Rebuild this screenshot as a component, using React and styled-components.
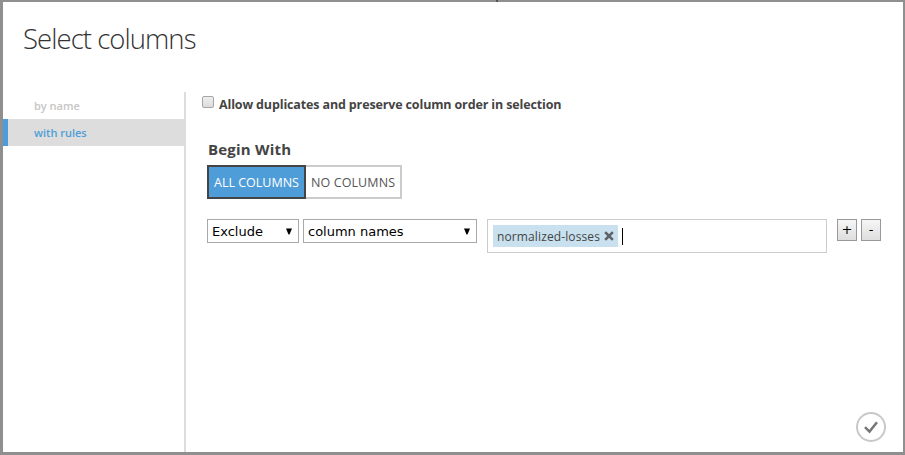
import React from "react";
import styled, { createGlobalStyle } from "styled-components";

const GlobalStyle = createGlobalStyle`
  * { box-sizing: border-box; }
  body { margin: 0; overflow: hidden; font-family: "Open Sans", "Noto Sans", sans-serif; color: #444; }
`;

const Dialog = styled.div`
  position: relative;
  width: 905px;
  height: 455px;
  display: flex;
  flex-direction: column;
  background: #fff;
  border: solid #908f8f;
  border-width: 2px 2px 3px 3px;
`;

const BackdropMark = styled.i`
  position: absolute;
  top: -2px;
  left: 493px;
  width: 2px;
  height: 2px;
  background: #555;
`;

const Title = styled.h1`
  margin: 0;
  height: 90px;
  padding: 17px 0 0 20px;
  font-size: 27.5px;
  line-height: 40px;
  font-weight: 300;
  letter-spacing: -0.95px;
  white-space: nowrap;
  color: #333;
`;

const Body = styled.div`
  flex: 1;
  display: flex;
`;

const Sidebar = styled.nav`
  width: 183px;
  border-right: 2px solid #ddd;
`;

const Tab = styled.div`
  height: 27px;
  padding-left: ${(p) => (p.$active ? 26 : 31)}px;
  border-left: ${(p) => (p.$active ? "5px solid #4f9dd8" : "0")};
  background: ${(p) => (p.$active ? "#ddd" : "transparent")};
  color: ${(p) => (p.$active ? "#4f9dd8" : "#c6c6c6")};
  font-size: 11px;
  font-weight: 600;
  line-height: 27px;
`;

const Main = styled.main`
  flex: 1;
  padding: 4px 0 0 21px;
`;

const CheckRow = styled.label`
  display: flex;
  height: 18px;
  margin-left: -5px;
  gap: 5px;
`;

const Box = styled.span`
  width: 12px;
  height: 12px;
  border: 1px solid #a6a6a6;
  border-radius: 2px;
  background: linear-gradient(#eee, #dcdcdc);
`;

const CheckLabel = styled.span`
  font-size: 12.5px;
  font-weight: 700;
  line-height: 17px;
  letter-spacing: -0.14px;
  white-space: nowrap;
`;

const Heading = styled.h2`
  margin: 25px 0 0 1px;
  height: 26px;
  font-size: 15px;
  line-height: 21px;
  font-weight: 700;
  letter-spacing: 0.2px;
`;

const Toggle = styled.div`
  display: flex;
  height: 34px;
`;

const Choice = styled.div`
  width: ${(p) => p.$width}px;
  padding-left: 5px;
  border: 2px solid ${(p) => (p.$active ? "#444" : "#ccc")};
  border-left-width: ${(p) => (p.$active ? 2 : 0)}px;
  background: ${(p) => (p.$active ? "#4f9dd8" : "#fff")};
  color: ${(p) => (p.$active ? "#fff" : "#555")};
  font-size: 12.5px;
  line-height: 31px;
  letter-spacing: ${(p) => p.$spacing}px;
  white-space: nowrap;
`;

const RuleRow = styled.div`
  display: flex;
  align-items: flex-start;
  margin-top: 20px;
`;

const Select = styled.div`
  display: flex;
  justify-content: space-between;
  width: ${(p) => p.$width}px;
  height: 24px;
  margin-right: ${(p) => p.$gap}px;
  padding: 0 6px 0 4px;
  border: 1px solid #a9a9a9;
  color: #000;
  font-family: "DejaVu Sans", sans-serif;
  font-size: 13px;
  line-height: 23px;

  svg { margin-top: 8px; }
`;

const TokenInput = styled.div`
  display: flex;
  width: 340px;
  height: 34px;
  margin-right: 10px;
  padding: 5px;
  border: 1px solid #ccc;
`;

const Token = styled.span`
  display: flex;
  justify-content: space-between;
  width: 125px;
  height: 22px;
  padding: 0 4px;
  background: #c9e1ef;
  font-size: 12px;
  line-height: 23px;
  letter-spacing: 0.12px;
  white-space: nowrap;

  svg { margin-top: 6px; }
`;

const Caret = styled.i`
  width: 1px;
  height: 17px;
  margin: 3px 0 0 4px;
  background: #000;
`;

const SmallButton = styled.button`
  width: 20px;
  height: 22px;
  margin-right: 4px;
  padding: 0;
  border: 1px solid #999;
  background: linear-gradient(#f6f6f6, #dedede);
  color: #000;
  font: 13px/20px "DejaVu Sans", sans-serif;
`;

const Confirm = styled.div`
  position: absolute;
  right: 16px;
  bottom: 9px;
  width: 32px;
  height: 32px;
`;

const Arrow = () => (
  <svg width="6" height="7" viewBox="0 0 6 7">
    <path d="M0 0.5H6L3.5 6.5H2.5Z" fill="#000" />
  </svg>
);

export default function App() {
  return (
    <>
      <GlobalStyle />
      <Dialog>
        <BackdropMark />
        <Title>Select columns</Title>
        <Body>
          <Sidebar>
            <Tab>by name</Tab>
            <Tab $active>with rules</Tab>
          </Sidebar>
          <Main>
            <CheckRow>
              <Box />
              <CheckLabel>Allow duplicates and preserve column order in selection</CheckLabel>
            </CheckRow>
            <Heading>Begin With</Heading>
            <Toggle>
              <Choice $active $width={99} $spacing={0}>ALL COLUMNS</Choice>
              <Choice $width={96} $spacing={0.1}>NO COLUMNS</Choice>
            </Toggle>
            <RuleRow>
              <Select $width={92} $gap={4}>Exclude<Arrow /></Select>
              <Select $width={174} $gap={10}>column names<Arrow /></Select>
              <TokenInput>
                <Token>
                  normalized-losses
                  <svg width="10" height="10" viewBox="0 0 10 10">
                    <path d="M1.2 1.2L8.8 8.8M8.8 1.2L1.2 8.8" stroke="#5c6265" strokeWidth="2.6" />
                  </svg>
                </Token>
                <Caret />
              </TokenInput>
              <SmallButton>+</SmallButton>
              <SmallButton>-</SmallButton>
            </RuleRow>
          </Main>
        </Body>
        <Confirm>
          <svg width="32" height="32" viewBox="0 0 32 32">
            <circle cx="16" cy="16" r="14" fill="none" stroke="#c8c8c8" strokeWidth="2" />
            <path d="M10 16.2L14.5 20.6L22 11.2" fill="none" stroke="#777" strokeWidth="2.5" />
          </svg>
        </Confirm>
      </Dialog>
    </>
  );
}
